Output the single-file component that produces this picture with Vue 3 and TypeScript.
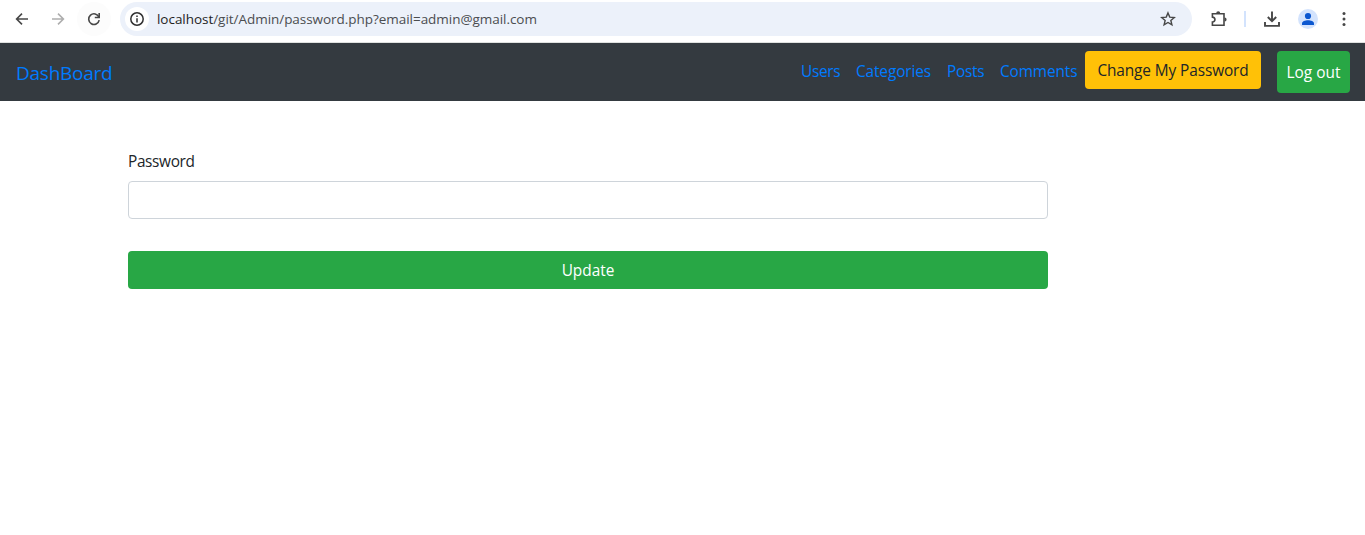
<script setup lang="ts">
import { ref } from 'vue'

interface NavLink {
  label: string
  key: string
}

const links: NavLink[] = [
  { label: 'Users', key: 'users' },
  { label: 'Categories', key: 'categories' },
  { label: 'Posts', key: 'posts' },
  { label: 'Comments', key: 'comments' },
]

const password = ref('')
</script>

<template>
  <div class="window">
    <header class="toolbar">
      <svg class="icon back" viewBox="0 0 16 16"><path d="M14 8H3M8 2.6L2.6 8L8 13.4" /></svg>
      <svg class="icon forward" viewBox="0 0 16 16"><path d="M2 8H13M8 2.6L13.4 8L8 13.4" /></svg>
      <span class="reload">
        <svg class="icon" viewBox="0 0 16 16">
          <path d="M12.9 6.1A5.3 5.3 0 1 0 13.2 9.2" />
          <path d="M13.2 2V6.5H8.8" />
        </svg>
      </span>
      <div class="address">
        <span class="info">
          <svg class="icon" viewBox="0 0 16 16">
            <circle cx="8" cy="8" r="6.2" />
            <path d="M8 7.3V11.4M8 4.5V6" />
          </svg>
        </span>
        <span class="url"><span class="host">localhost</span>/git/Admin/password.php?email=admin@gmail.com</span>
        <svg class="icon star" viewBox="0 0 16 16">
          <path d="M8 1.9L9.75 6.1L14.3 6.45L10.85 9.4L11.9 13.8L8 11.45L4.1 13.8L5.15 9.4L1.7 6.45L6.25 6.1Z" />
        </svg>
      </div>
      <svg class="icon puzzle" viewBox="0 0 18 18">
        <path d="M2.4 3.8H14V15.2H2.4V12C5.8 11.8 5.8 7.3 2.4 7.1Z" />
        <path class="solid" d="M6.2 3.2a2 2 0 0 1 4 0zM14.6 7.5a2 2 0 0 1 0 4z" />
      </svg>
      <span class="divider"></span>
      <svg class="icon download" viewBox="0 0 18 18">
        <path d="M9 1.5V11M4.8 7L9 11.2L13.2 7M2 12V15.9H16V12" />
      </svg>
      <span class="avatar">
        <svg viewBox="0 0 20 20"><circle cx="10" cy="7" r="3.1" /><path d="M4 16v-1.6c0-2.3 3.2-3.2 6-3.2s6 .9 6 3.2V16z" /></svg>
      </span>
      <svg class="dots" viewBox="0 0 4 16"><circle cx="2" cy="2.5" r="1.5" /><circle cx="2" cy="8" r="1.5" /><circle cx="2" cy="13.5" r="1.5" /></svg>
    </header>

    <nav class="navbar">
      <a class="brand">DashBoard</a>
      <div class="links">
        <a v-for="link in links" :key="link.key" class="link" :class="link.key">{{ link.label }}</a>
        <button class="btn warning" type="button"><span>Change My Password</span></button>
        <button class="btn logout" type="button"><span>Log out</span></button>
      </div>
    </nav>

    <form class="form" @submit.prevent>
      <label class="label" for="password">Password</label>
      <input id="password" v-model="password" class="input" type="password" />
      <button class="btn update" type="submit"><span>Update</span></button>
    </form>
  </div>
</template>

<style>
body {
  margin: 0;
  background: #fff;
}
</style>

<style scoped>
.window,
.window * {
  box-sizing: border-box;
}
.window {
  height: 535px;
  overflow: hidden;
  font-family: 'Open Sans', 'Noto Sans', sans-serif;
  font-size: 15.4px;
  line-height: 24px;
  color: #212529;
  white-space: nowrap;
}
.toolbar {
  display: flex;
  align-items: center;
  height: 43px;
  padding: 0 19px 5px 14px;
  border-bottom: 1px solid #dfe1e0;
}
.icon {
  display: block;
  flex: none;
  width: 16px;
  height: 16px;
  fill: none;
  stroke: #474747;
  stroke-width: 1.6;
}
.forward {
  margin-left: 20px;
  stroke: #aeaeae;
}
.reload {
  display: grid;
  place-items: center;
  width: 34px;
  height: 34px;
  margin-left: 11px;
  border-radius: 50%;
  background: #fcfcfc;
}
.address {
  display: flex;
  align-items: center;
  width: 1072px;
  height: 34px;
  margin-left: 9px;
  padding: 0 16px 0 5px;
  border-radius: 17px;
  background: #ecf1fa;
}
.info {
  display: grid;
  place-items: center;
  width: 24px;
  height: 24px;
  border-radius: 50%;
  background: #fff;
}
.info .icon {
  stroke: #303030;
  stroke-width: 1.5;
}
.url {
  margin-left: 8px;
  font-size: 13.5px;
  letter-spacing: -0.04px;
  color: #4b4d50;
}
.host {
  color: #1f1f1f;
}
.star {
  margin-left: auto;
  stroke-width: 1.4;
}
.puzzle {
  width: 18px;
  height: 18px;
  margin-left: 18px;
}
.solid {
  fill: #474747;
  stroke: none;
}
.divider {
  width: 2px;
  height: 16px;
  margin-left: 16px;
  background: #d3e3fd;
}
.download {
  width: 18px;
  height: 18px;
  margin-left: 17px;
  stroke-width: 1.9;
}
.avatar {
  width: 20px;
  height: 20px;
  margin-left: 17px;
  border-radius: 50%;
  background: #d3e3fd;
}
.avatar svg {
  display: block;
  fill: #0b57d0;
}
.dots {
  width: 4px;
  height: 16px;
  margin-left: auto;
  fill: #474747;
}
.navbar {
  display: flex;
  justify-content: space-between;
  height: 58px;
  padding: 8px 15px 8px 16px;
  background: #343a40;
}
.brand {
  padding-top: 7px;
  font-size: 19px;
  line-height: 30px;
  letter-spacing: -0.25px;
  color: #007bff;
}
.links {
  display: flex;
  align-items: flex-start;
}
.link {
  height: 40px;
  margin-right: 16px;
  padding-top: 9px;
  letter-spacing: -0.12px;
  color: #007bff;
}
.users {
  width: 39px;
  letter-spacing: -0.3px;
}
.categories {
  width: 75px;
}
.posts {
  width: 37px;
  letter-spacing: -0.25px;
}
.comments {
  width: 77px;
  margin-right: 8px;
}
.btn {
  display: flex;
  justify-content: center;
  align-items: center;
  height: 38px;
  padding: 2px 0 0;
  border: 0;
  border-radius: 4px;
  background: #28a745;
  color: #fff;
  font: inherit;
  white-space: nowrap;
}
.warning {
  width: 176px;
  margin-right: 16px;
  background: #ffc107;
  color: #212529;
  letter-spacing: -0.1px;
}
.logout {
  width: 73px;
  height: 42px;
}
.form {
  width: 920px;
  margin: 48px 0 0 128px;
}
.label {
  display: block;
  height: 32px;
  padding-top: 1px;
  letter-spacing: -0.35px;
}
.input {
  display: block;
  width: 100%;
  height: 38px;
  padding: 6px 12px;
  border: 1px solid #ced4da;
  border-radius: 4px;
  outline: none;
  background: #fff;
  font: inherit;
}
.update {
  width: 100%;
  margin-top: 32px;
}
</style>
